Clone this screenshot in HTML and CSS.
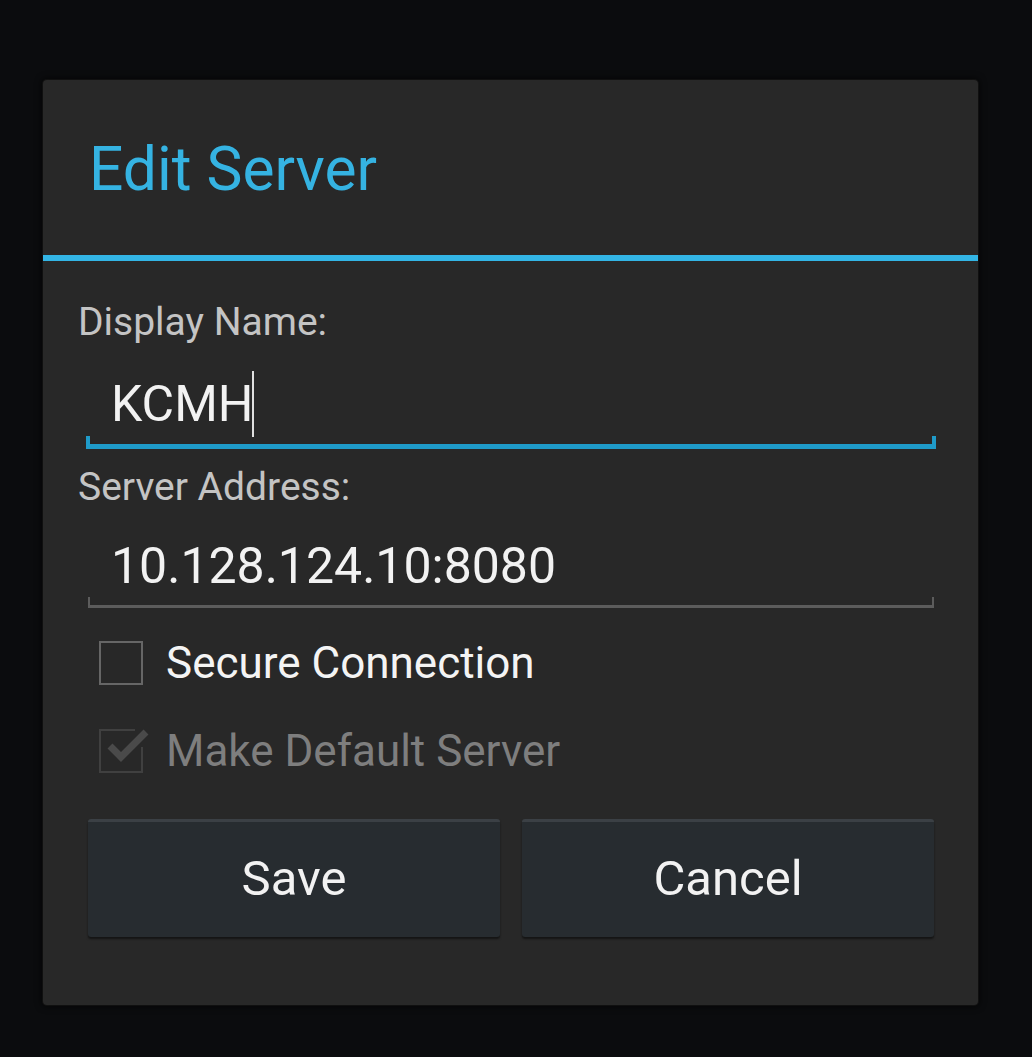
FILE: index.html
```html
<!DOCTYPE html>
<html>
<head>
<meta charset="utf-8">
<link rel="stylesheet" href="styles.css">
</head>
<body>
<div class="dialog">
  <div class="dialog-header">
    <h1 class="dialog-title">Edit Server</h1>
  </div>
  <div class="dialog-divider"></div>
  <div class="dialog-body">
    <div class="field-label">Display Name:</div>
    <div class="field field-focused">
      <span class="field-text">KCMH</span><span class="cursor"></span>
    </div>
    <div class="field-label label-second">Server Address:</div>
    <div class="field field-normal">
      <span class="field-text">10.128.124.10:8080</span>
    </div>
    <div class="check-row">
      <span class="checkbox"></span>
      <span class="check-text">Secure Connection</span>
    </div>
    <div class="check-row disabled">
      <svg class="checkbox-svg" viewBox="0 0 44 44" width="44" height="44">
        <path d="M36 1 H1 V43 H43 V18" fill="none" stroke="#404040" stroke-width="2"/>
        <path d="M11 17 L22 28 L47 3" fill="none" stroke="#4a4a4a" stroke-width="7" stroke-linecap="butt" stroke-linejoin="miter"/>
      </svg>
      <span class="check-text">Make Default Server</span>
    </div>
    <div class="button-row">
      <div class="btn">Save</div>
      <div class="btn">Cancel</div>
    </div>
  </div>
</div>
</body>
</html>
```
FILE: styles.css
```css
html, body {
  margin: 0;
  padding: 0;
  background: #0b0c0e;
  font-family: Roboto, "Noto Sans", sans-serif;
}

body {
  width: 1032px;
  height: 1057px;
  overflow: hidden;
}

.dialog {
  margin: 80px 0 0 43px;
  width: 935px;
  height: 925px;
  background: #282828;
  border-radius: 4px;
  box-shadow: 0 0 6px 2px rgba(0,0,0,0.6), 0 0 0 1px #1c1c1c;
  display: flex;
  flex-direction: column;
}

.dialog-header {
  height: 175px;
  display: flex;
  align-items: center;
  padding-left: 46px;
  box-sizing: border-box;
}

.dialog-title {
  margin: 6px 0 0 0;
  font-weight: 400;
  font-size: 60.5px;
  color: #35b3e2;
  line-height: 1;
}

.dialog-divider {
  height: 6px;
  background: #33b5e5;
}

.dialog-body {
  padding: 37px 42px 0 35px;
  display: flex;
  flex-direction: column;
}

.field-label {
  font-size: 39px;
  line-height: 48px;
  color: #c4c4c4;
}

.label-second {
  margin-top: 14px;
}

.field {
  position: relative;
  margin-left: 8px;
  padding-left: 25px;
  font-size: 50px;
  line-height: 64px;
  color: #f2f2f2;
  display: flex;
  align-items: center;
}

.field-focused {
  margin-top: 25px;
  padding-bottom: 12px;
}

.field-normal {
  margin-top: 23px;
  padding-bottom: 10px;
  margin-left: 10px;
  margin-right: 2px;
  padding-left: 23px;
}

.field::after {
  content: "";
  position: absolute;
  left: 0;
  right: 0;
  bottom: 0;
  box-sizing: border-box;
}

.field-focused::after {
  height: 13px;
  border-left: 4px solid #1f9bc9;
  border-right: 4px solid #1f9bc9;
  border-bottom: 5px solid #1f9bc9;
}

.field-normal::after {
  height: 11px;
  border-left: 2px solid #5c5c5c;
  border-right: 2px solid #5c5c5c;
  border-bottom: 3px solid #5c5c5c;
}

.cursor {
  display: inline-block;
  width: 2px;
  height: 66px;
  background: #e0e0e0;
  margin-left: -1px;
}

.check-row {
  display: flex;
  align-items: center;
  height: 88px;
  margin-left: 21px;
  gap: 23px;
  font-size: 44px;
  color: #f4f4f4;
}

.field-normal + .check-row {
  margin-top: 11px;
}

.checkbox {
  width: 44px;
  height: 44px;
  box-sizing: border-box;
  border: 2px solid #666666;
  flex: none;
}

.checkbox-svg {
  flex: none;
  overflow: visible;
  display: block;
}

.disabled .check-text {
  color: #7e7e7e;
}

.button-row {
  margin: 24px 2px 0 10px;
  display: flex;
  gap: 22px;
}

.btn {
  flex: 1;
  height: 118px;
  box-sizing: border-box;
  background: #272c30;
  border-top: 3px solid #3b4045;
  border-radius: 3px;
  box-shadow: 0 2px 2px rgba(0,0,0,0.5);
  display: flex;
  align-items: center;
  justify-content: center;
  font-size: 49px;
  color: #f2f2f2;
  padding-bottom: 2px;
}
```
